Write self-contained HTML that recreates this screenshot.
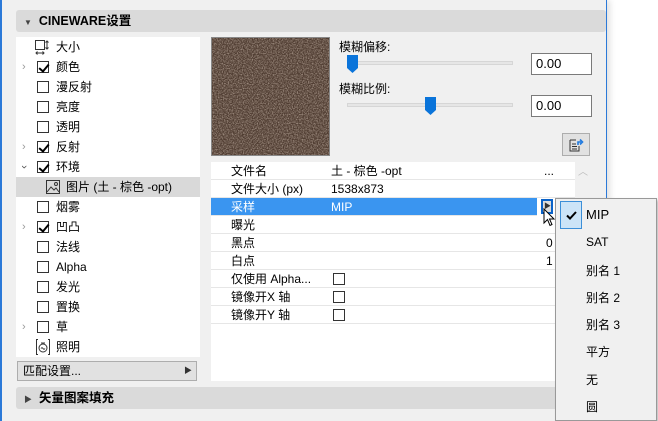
<!DOCTYPE html>
<html><head><meta charset="utf-8"><style>
*{box-sizing:border-box;margin:0;padding:0}
body{width:658px;height:421px;overflow:hidden;background:#fff;font-family:"Liberation Sans","Noto Sans CJK SC",sans-serif;font-size:12px;color:#000;position:relative}
.a{position:absolute}
.win{left:0;top:0;width:607px;height:421px;background:#f0f0f0;border-left:2px solid #2b79d8;border-right:1px solid #2b79d8;box-shadow:3px 0 6px rgba(0,0,0,.12)}
.hdr{background:#dadada;border-radius:3px;font-weight:bold;font-size:12.5px}
.cb{position:absolute;width:12px;height:12px;border:1px solid #333;background:#fff}
.cb.c::after{content:"";position:absolute;left:3px;top:0px;width:4px;height:8px;border:solid #000;border-width:0 2px 2px 0;transform:rotate(40deg)}
.row{position:absolute;left:0;height:20px;line-height:20px;width:184px}
.chev{position:absolute;left:6px;top:0;color:#999;font-size:11px}
.tr{position:absolute;left:0;width:364px;height:18px;line-height:18px;border-bottom:1px solid #e6e6e6}
.mi{position:absolute;left:30px;font-size:12px}
</style></head><body>
<div class="a win"></div>
<div class="a hdr" style="left:16px;top:10px;width:590px;height:22px;line-height:22px;padding-left:8px"><span style="font-size:8px;color:#444">▼</span>&nbsp; CINEWARE设置</div>

<div class="a" style="left:16px;top:37px;width:184px;height:320px;background:#fff">
 <div class="row" style="top:0"><svg class="a" style="left:19px;top:3px" width="14" height="15"><rect x=".5" y=".5" width="9" height="9" fill="none" stroke="#333"/><path d="M12 1v8M10.5 2.5L12 1l1.5 1.5M10.5 7.5L12 9l1.5-1.5M1 13h8M2.5 11.5L1 13l1.5 1.5M7.5 11.5L9 13l-1.5 1.5" stroke="#333" fill="none"/></svg><span class="a" style="left:40px">大小</span></div>
 <div class="row" style="top:20px"><span class="chev">›</span><div class="cb c" style="left:21px;top:4px"></div><span class="a" style="left:40px">颜色</span></div>
 <div class="row" style="top:40px"><div class="cb" style="left:21px;top:4px"></div><span class="a" style="left:40px">漫反射</span></div>
 <div class="row" style="top:60px"><div class="cb" style="left:21px;top:4px"></div><span class="a" style="left:40px">亮度</span></div>
 <div class="row" style="top:80px"><div class="cb" style="left:21px;top:4px"></div><span class="a" style="left:40px">透明</span></div>
 <div class="row" style="top:100px"><span class="chev">›</span><div class="cb c" style="left:21px;top:4px"></div><span class="a" style="left:40px">反射</span></div>
 <div class="row" style="top:120px"><span class="chev" style="transform:rotate(90deg);color:#555">›</span><div class="cb c" style="left:21px;top:4px"></div><span class="a" style="left:40px">环境</span></div>
 <div class="row" style="top:140px;background:#d9d9d9"><svg class="a" style="left:30px;top:3px" width="14" height="14"><rect x=".5" y=".5" width="13" height="13" fill="none" stroke="#333"/><path d="M1 12l4-5 3 3 2-2 3 4" fill="none" stroke="#333"/><circle cx="10" cy="4" r="1.5" fill="none" stroke="#333"/></svg><span class="a" style="left:50px">图片 (土 - 棕色 -opt)</span></div>
 <div class="row" style="top:160px"><div class="cb" style="left:21px;top:4px"></div><span class="a" style="left:40px">烟雾</span></div>
 <div class="row" style="top:180px"><span class="chev">›</span><div class="cb c" style="left:21px;top:4px"></div><span class="a" style="left:40px">凹凸</span></div>
 <div class="row" style="top:200px"><div class="cb" style="left:21px;top:4px"></div><span class="a" style="left:40px">法线</span></div>
 <div class="row" style="top:220px"><div class="cb" style="left:21px;top:4px"></div><span class="a" style="left:40px">Alpha</span></div>
 <div class="row" style="top:240px"><div class="cb" style="left:21px;top:4px"></div><span class="a" style="left:40px">发光</span></div>
 <div class="row" style="top:260px"><div class="cb" style="left:21px;top:4px"></div><span class="a" style="left:40px">置换</span></div>
 <div class="row" style="top:280px"><span class="chev">›</span><div class="cb" style="left:21px;top:4px"></div><span class="a" style="left:40px">草</span></div>
 <div class="row" style="top:300px"><svg class="a" style="left:20px;top:2px" width="14" height="16"><path d="M2 .5H.5v15H2M12 .5h1.5v15H12" fill="none" stroke="#333"/><circle cx="7" cy="9" r="4" fill="none" stroke="#333"/><path d="M5 4h4M5 9.5q1-1.5 2 0t2 0" fill="none" stroke="#333"/></svg><span class="a" style="left:40px">照明</span></div>
</div>
<div class="a" style="left:17px;top:361px;width:180px;height:20px;border:1px solid #adadad;background:#e1e1e1;line-height:18px;padding-left:5px">匹配设置...<span class="a" style="right:4px;top:0;font-size:8px;color:#333">▶</span></div>
<div class="a hdr" style="left:16px;top:387px;width:590px;height:22px;line-height:22px;padding-left:8px"><span style="font-size:8px;color:#444">▶</span>&nbsp; 矢量图案填充</div>

<svg class="a" style="left:211px;top:37px" width="119" height="119"><filter id="n"><feTurbulence type="fractalNoise" baseFrequency="0.8" numOctaves="2" seed="3"/><feColorMatrix values="0 0 0 0 .55  0 0 0 0 .45  0 0 0 0 .38  0 0 0 -2.2 1.4"/></filter><rect width="119" height="119" fill="#4f3c31"/><rect width="119" height="119" filter="url(#n)" opacity=".7"/><rect x=".5" y=".5" width="118" height="118" fill="none" stroke="#888"/></svg>

<span class="a" style="left:339px;top:38px">模糊偏移:</span>
<div class="a" style="left:347px;top:61px;width:166px;height:4px;background:#e6e6e6;border:1px solid #d6d6d6"></div>
<svg class="a" style="left:347px;top:55px" width="11" height="18"><path d="M0 0h11v13l-5.5 5L0 13z" fill="#0a74da"/></svg>
<div class="a" style="left:531px;top:53px;width:61px;height:22px;border:1px solid #7a7a7a;background:#fff;line-height:20px;padding-left:4px;font-size:13px">0.00</div>
<span class="a" style="left:339px;top:80px">模糊比例:</span>
<div class="a" style="left:347px;top:103px;width:166px;height:4px;background:#e6e6e6;border:1px solid #d6d6d6"></div>
<svg class="a" style="left:425px;top:97px" width="11" height="18"><path d="M0 0h11v13l-5.5 5L0 13z" fill="#0a74da"/></svg>
<div class="a" style="left:531px;top:95px;width:61px;height:22px;border:1px solid #7a7a7a;background:#fff;line-height:20px;padding-left:4px;font-size:13px">0.00</div>
<div class="a" style="left:562px;top:133px;width:28px;height:23px;border:1px solid #adadad;background:#e1e1e1"><svg class="a" style="left:6px;top:4px" width="16" height="14"><path d="M1 2h6M1 2v11h9V8M3 6h4M3 8.5h5M3 11h5" fill="none" stroke="#333"/><path d="M9 7V4h3M11 1.5l2.5 2.5L11 6.5" fill="none" stroke="#1f7ae0" stroke-width="1.6"/></svg></div>

<div class="a" style="left:211px;top:162px;width:364px;height:219px;background:#fff">
 <div class="tr" style="top:0"><span class="a" style="left:20px">文件名</span><span class="a" style="left:120px">土 - 棕色 -opt</span><span class="a" style="left:333px">...</span></div>
 <div class="tr" style="top:18px"><span class="a" style="left:20px">文件大小 (px)</span><span class="a" style="left:120px">1538x873</span></div>
 <div class="tr" style="top:36px;background:#3a95f0;color:#fff;width:326px"><span class="a" style="left:20px">采样</span><span class="a" style="left:120px">MIP</span></div>
 <div class="a" style="left:330px;top:37px;width:12px;height:15px;border:2px solid #0a62c8;background:#ddd"><span class="a" style="left:1px;top:-2px;font-size:7px;line-height:15px;color:#333">▶</span></div>
 <div class="tr" style="top:54px"><span class="a" style="left:20px">曝光</span></div>
 <div class="tr" style="top:72px"><span class="a" style="left:20px">黑点</span><span class="a" style="left:335px">0</span></div>
 <div class="tr" style="top:90px"><span class="a" style="left:20px">白点</span><span class="a" style="left:335px">1</span></div>
 <div class="tr" style="top:108px"><span class="a" style="left:20px">仅使用 Alpha...</span><div class="cb" style="left:122px;top:3px"></div></div>
 <div class="tr" style="top:126px"><span class="a" style="left:20px">镜像开X 轴</span><div class="cb" style="left:122px;top:3px"></div></div>
 <div class="tr" style="top:144px"><span class="a" style="left:20px">镜像开Y 轴</span><div class="cb" style="left:122px;top:3px"></div></div>
</div>
<span class="a" style="left:578px;top:163px;color:#bbb;font-size:10px">︿</span>
<svg class="a" style="left:543px;top:208px" width="14" height="20"><path d="M1 1v14l3.5-3.5 2.5 6 2-1-2.5-5.5H11z" fill="#fff" stroke="#000"/></svg>

<div class="a" style="left:555px;top:198px;width:102px;height:223px;background:#f0f0f0;border:1px solid #999;box-shadow:2px 2px 3px rgba(0,0,0,.25)">
 <div class="a" style="left:4px;top:2px;width:22px;height:28px;background:#cce4f7;border:1px solid #3c8fd8"><svg class="a" style="left:5px;top:9px" width="11" height="9"><path d="M1 4.5l3 3L10 1" fill="none" stroke="#000" stroke-width="2"/></svg></div>
 <span class="mi" style="top:8px;font-size:13px">MIP</span>
 <span class="mi" style="top:36px">SAT</span>
 <span class="mi" style="top:63px">别名 1</span>
 <span class="mi" style="top:90px">别名 2</span>
 <span class="mi" style="top:117px">别名 3</span>
 <span class="mi" style="top:144px">平方</span>
 <span class="mi" style="top:172px">无</span>
 <span class="mi" style="top:199px">圆</span>
</div>
</body></html>
